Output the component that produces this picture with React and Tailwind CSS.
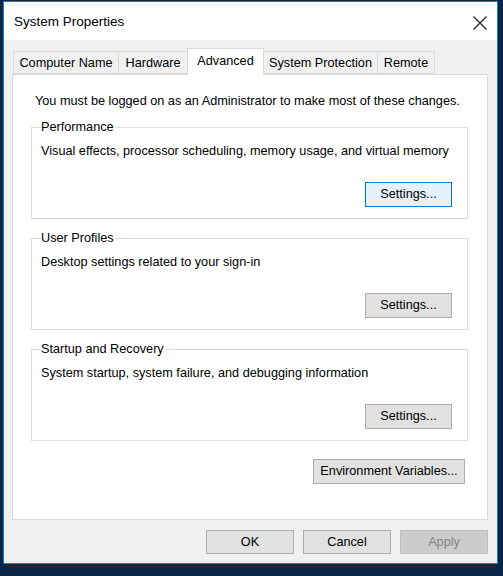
import { useState } from "react"

const font = { fontFamily: '"Liberation Sans", Arial, sans-serif' }

function Btn({ children, w, h = "h-[25px]", focused, disabled })
{
    const base = "flex items-center justify-center text-[12.7px] leading-none border"
    const look = disabled
        ? "bg-[#cccccc] border-[#bfbfbf] text-[#838383]"
        : focused
            ? "bg-[#e5f1fb] border-[#0078d7] text-black"
            : "bg-[#e1e1e1] border-[#adadad] text-black"
    return (
        <button className={`${base} ${look} ${w} ${h}`} disabled={disabled}>
            {children}
        </button>
    )
}

function Group({ title, text, focused })
{
    return (
        <fieldset className="border border-[#dcdcdc] ml-[18px] w-[437px] h-[100px] px-[9px]">
            <legend className="text-[12.7px] pr-[2px] leading-[16px] text-black">{title}</legend>
            <div className="text-[12.7px] leading-[16px] mt-[8px] text-black">{text}</div>
            <div className="mt-[23px] flex justify-end pr-[6px]">
                <Btn w="w-[87px]" focused={focused}>Settings...</Btn>
            </div>
        </fieldset>
    )
}

const tabs = [
    { name: "Computer Name", w: "w-[106px]" },
    { name: "Hardware", w: "w-[69px]" },
    { name: "Advanced", w: "w-[77px]", active: true },
    { name: "System Protection", w: "w-[114px]" },
    { name: "Remote", w: "w-[57px]" },
]

export default function App()
{
    const [tab] = useState("Advanced")
    return (
        <div className="w-[503px] h-[576px] bg-[#0b2746] pt-[1px] pl-[3px] overflow-hidden" style={font}>
            <div className="w-[495px] h-[563px] border border-[#1c7bd0] flex flex-col bg-[#f0f0f0]">
                {/* title bar */}
                <div className="h-[38px] bg-white flex items-center justify-between pl-[10px] pr-[8px] pt-[3px]">
                    <span className="text-[13.5px] text-black">System Properties</span>
                    <svg width="16" height="16" viewBox="0 0 16 16" className="mr-[1px]">
                        <path d="M1.5 1.5 L14.5 14.5 M14.5 1.5 L1.5 14.5" stroke="#222" strokeWidth="1.2" fill="none" />
                    </svg>
                </div>

                <div className="flex flex-col px-[8px] pt-[8px]">
                    {/* tabs */}
                    <div className="flex items-end h-[26px] pl-[1px] relative z-10">
                        {tabs.map((t) => (
                            t.name === tab ? (
                                <div key={t.name} className={`${t.w} h-[27px] -mb-[1px] -ml-[1px] bg-white border border-[#d9d9d9] border-b-0 flex items-center justify-center text-[12.7px] text-black`}>
                                    {t.name}
                                </div>
                            ) : (
                                <div key={t.name} className={`${t.w} h-[23px] bg-[#f0f0f0] border border-[#d9d9d9] border-l-0 first:border-l flex items-center justify-center text-[12.7px] text-black pt-[2px]`}>
                                    {t.name}
                                </div>
                            )
                        ))}
                    </div>

                    {/* panel */}
                    <div className="w-[476px] h-[446px] bg-white border border-[#d9d9d9] flex flex-col">
                        <div className="text-[12.7px] leading-[16px] text-black pl-[22px] pt-[18px]">
                            You must be logged on as an Administrator to make most of these changes.
                        </div>
                        <div className="mt-[10px] flex flex-col gap-[11px]">
                            <Group title="Performance" text="Visual effects, processor scheduling, memory usage, and virtual memory" focused />
                            <Group title="User Profiles" text="Desktop settings related to your sign-in" />
                            <Group title="Startup and Recovery" text="System startup, system failure, and debugging information" />
                        </div>
                        <div className="flex justify-end pr-[22px] mt-[18px]">
                            <Btn w="w-[152px]">Environment Variables...</Btn>
                        </div>
                    </div>

                    {/* dialog buttons */}
                    <div className="flex justify-end gap-[9px] mt-[10px] pr-[1px]">
                        <Btn w="w-[88px]" h="h-[24px]">OK</Btn>
                        <Btn w="w-[88px]" h="h-[24px]">Cancel</Btn>
                        <Btn w="w-[88px]" h="h-[24px]" disabled>Apply</Btn>
                    </div>
                </div>
            </div>
        </div>
    )
}
